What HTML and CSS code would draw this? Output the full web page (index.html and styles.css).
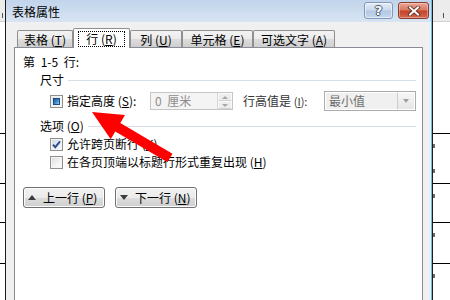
FILE: index.html
```html
<!DOCTYPE html>
<html lang="zh-CN">
<head>
<meta charset="utf-8">
<title>表格属性</title>
<link rel="stylesheet" href="styles.css">
</head>
<body>
<div class="screen">
  <div class="doc doc-left">
    <div class="ruler"><span class="tick tick-left"></span></div>
    <div class="cell r1"></div>
    <div class="cell r2"></div>
    <div class="cell r3"></div>
    <div class="cell r4"></div>
    <div class="cell r5"></div>
  </div>

  <div class="dialog">
    <div class="titlebar">
      <span class="title">表格属性</span>
      <div class="caption-btns">
        <span class="cap help">?</span>
        <span class="cap close">
          <svg width="14" height="10" viewBox="0 0 14 10">
            <path d="M3 1.5 L11 8.5 M11 1.5 L3 8.5" stroke="#5a2418" stroke-width="3.6" stroke-linecap="square" fill="none"/>
            <path d="M3 1.5 L11 8.5 M11 1.5 L3 8.5" stroke="#ffffff" stroke-width="2" stroke-linecap="square" fill="none"/>
          </svg>
        </span>
      </div>
    </div>

    <div class="body">
      <div class="tabs">
        <div class="tab t1">表格 (<u>T</u>)</div>
        <div class="tab t2 active"><span class="focus">行 (<u>R</u>)</span></div>
        <div class="tab t3">列 (<u>U</u>)</div>
        <div class="tab t4">单元格 (<u>E</u>)</div>
        <div class="tab t5">可选文字 (<u>A</u>)</div>
      </div>

      <div class="panel">
        <div class="row-info">第 1-5 行:</div>

        <div class="group-head">尺寸</div>

        <div class="row-height">
          <span class="checkbox mixed"><span class="fill"></span></span>
          <span class="label lbl-height">指定高度 (<u>S</u>):</span>
          <span class="input">
            <span class="input-text">0 厘米</span>
            <span class="spin">
              <span class="spin-btn"><span class="tri-up small"></span></span>
              <span class="spin-btn"><span class="tri-down small"></span></span>
            </span>
          </span>
          <span class="label lbl-rule">行高值是 <span class="mn">(<u>I</u>):</span></span>
          <span class="select">
            <span class="select-text">最小值</span>
            <span class="drop"><span class="tri-down grey"></span></span>
          </span>
        </div>

        <div class="group-head">选项 (<u>O</u>)</div>

        <div class="check-row">
          <span class="checkbox checked">
            <svg width="11" height="11" viewBox="0 0 11 11">
              <path d="M2 5.6 L4.3 8.2 L9 2.4" stroke="#2c4e8a" stroke-width="1.9" fill="none"/>
            </svg>
          </span>
          <span class="label">允许跨页断行 (<u>K</u>)</span>
        </div>
        <div class="check-row">
          <span class="checkbox"></span>
          <span class="label">在各页顶端以标题行形式重复出现 (<u>H</u>)</span>
        </div>

        <div class="btn-row">
          <span class="btn"><span class="tri-up"></span><span class="btn-text">上一行 (<u>P</u>)</span></span>
          <span class="btn"><span class="tri-down"></span><span class="btn-text">下一行 (<u>N</u>)</span></span>
        </div>
      </div>
    </div>
  </div>

  <div class="doc doc-right">
    <div class="ruler"><span class="tick tick-right"></span></div>
    <div class="cell r1"></div>
    <div class="cell r2"><span class="mark"></span><span class="mark second"></span></div>
    <div class="cell r3"><span class="mark"></span></div>
    <div class="cell r4"><span class="mark"></span></div>
    <div class="cell r5"><span class="mark"></span></div>
  </div>

  <svg class="arrow" width="450" height="300" viewBox="0 0 450 300">
    <polygon points="92,112 125,115 120.3,122.9 172.5,153.7 167.5,162.3 115.3,131.5 110.7,139.3" fill="#ff0000"/>
  </svg>
</div>
</body>
</html>
```

FILE: styles.css
```css
* { box-sizing: border-box; }

html, body {
  margin: 0;
  padding: 0;
}

body {
  width: 450px;
  height: 300px;
  overflow: hidden;
  background: #fff;
  font-family: "Noto Sans CJK SC", "Noto Sans", sans-serif;
  font-size: 12px;
  color: #000;
}

u { text-decoration: underline; text-underline-offset: 1px; }

.screen {
  position: relative;
  display: flex;
  width: 450px;
  height: 300px;
  overflow: hidden;
}

/* background document */
.doc {
  display: flex;
  flex-direction: column;
  background: #fff;
}
.doc-left { width: 5px; }
.doc-right { width: 17px; }

.ruler {
  height: 22px;
  background: #ececec;
  border-bottom: 1px solid #d0d0d0;
  display: flex;
}
.tick {
  width: 1px;
  height: 5px;
  background: #555;
  margin-top: 13px;
}
.tick-left { margin-left: 2px; }
.tick-right { margin-left: 10px; }

.cell {
  display: flex;
  flex-direction: column;
}
.r1 { height: 111px; }
.r2 { height: 50px; border-top: 1px solid #000; }
.r3 { height: 39px; border-top: 1px solid #000; }
.r4 { height: 41px; border-top: 1px solid #000; }
.r5 { flex: 1; border-top: 1px solid #000; }

.mark {
  width: 2px;
  height: 4px;
  background: #6a6a6a;
  margin-top: 10px;
}
.mark.second { margin-top: 21px; }

/* dialog */
.dialog {
  width: 428px;
  display: flex;
  flex-direction: column;
  border-left: 1px solid #1c1c1c;
  border-right: 1px solid #1c1c1c;
  padding-right: 1px;
  background: #62c0ea;
}

.titlebar {
  height: 22px;
  display: flex;
  align-items: center;
  justify-content: space-between;
  padding: 0 2px 0 6px;
  background: linear-gradient(#c1d4eb, #cfdef0 60%, #d8e4f3);
}
.title {
  font-size: 12px;
  line-height: 14px;
  color: #000;
  margin-top: 1px;
}

.caption-btns {
  display: flex;
  gap: 5px;
  align-self: flex-start;
  margin-top: 2px;
}
.cap {
  height: 17px;
  border-radius: 3px;
  display: flex;
  align-items: center;
  justify-content: center;
}
.help {
  width: 29px;
  border: 1px solid #7f99b9;
  background: linear-gradient(#e3ecf7, #c9d9ec 48%, #b3c8e2 52%, #c4d6ec);
  box-shadow: inset 0 0 0 1px rgba(255,255,255,0.55);
  color: #fff;
  font-family: "DejaVu Sans", sans-serif;
  font-weight: bold;
  font-size: 13px;
  line-height: 13px;
  text-shadow: 1px 0 #45566e, -1px 0 #45566e, 0 1px #45566e, 0 -1px #45566e;
}
.close {
  width: 31px;
  border: 1px solid #8b3b2b;
  background: linear-gradient(#e9a795, #d8785f 48%, #c3432a 52%, #d2674b);
  box-shadow: inset 0 0 0 1px rgba(255,255,255,0.35);
}

.body {
  flex: 1;
  display: flex;
  flex-direction: column;
  background: #f0f0f0;
  padding: 6px 8px 0 8px;
}

/* tabs */
.tabs {
  height: 19px;
  display: flex;
  align-items: flex-end;
  padding-left: 3px;
}
.tab {
  height: 17px;
  border: 1px solid #8e8f8f;
  border-bottom: none;
  border-radius: 2px 2px 0 0;
  background: linear-gradient(#f3f3f3, #ebebeb 50%, #dddddd 50%, #cfcfcf);
  display: flex;
  align-items: center;
  justify-content: center;
  line-height: 14px;
  white-space: nowrap;
  padding-top: 1px;
}
.t1 { width: 56px; }
.t2 { width: 57px; }
.t3 { width: 52px; }
.t4 { width: 71px; }
.t5 { width: 82px; }
.tab.active {
  height: 20px;
  margin-bottom: -1px;
  background: #fff;
  position: relative;
  z-index: 1;
  padding-top: 0;
}
.focus {
  width: 47px;
  height: 16px;
  border: 1px dotted #000;
  display: flex;
  align-items: center;
  justify-content: center;
}

.panel {
  flex: 1;
  background: #fff;
  border: 1px solid #898c95;
  border-bottom: none;
  display: flex;
  flex-direction: column;
}

.row-info {
  height: 14px;
  line-height: 14px;
  margin-top: 7px;
  padding-left: 8px;
  word-spacing: 3px;
}

.group-head {
  height: 14px;
  line-height: 14px;
  margin: 0 6px 0 25px;
  display: flex;
  align-items: center;
}
.group-head::after {
  content: "";
  flex: 1;
  border-top: 1px solid #d5dfe5;
  margin-left: 4px;
}
.row-info + .group-head { margin-top: 4px; }
.group-head + .check-row { margin-top: 2px; }
.row-height + .group-head { margin-top: 8px; }

.row-height {
  height: 20px;
  margin: 4px 0 0 35px;
  display: flex;
  align-items: center;
}

.label {
  line-height: 14px;
  white-space: nowrap;
}
.lbl-height {
  width: 83px;
  margin-left: 4px;
}
.lbl-rule {
  width: 81px;
  margin-left: 10px;
  color: #333;
}
.mn { font-size: 11px; }

.checkbox {
  width: 13px;
  height: 13px;
  flex: none;
  border: 1px solid #8e8f8f;
  background: linear-gradient(135deg, #dcdcdc, #f4f4f4 60%, #ffffff);
  box-shadow: inset 0 0 0 1px #f4f4f4;
  display: flex;
  align-items: center;
  justify-content: center;
}
.checkbox.checked {
  background: linear-gradient(135deg, #cbd6e4, #eef2f8 70%, #ffffff);
}
.checkbox.mixed .fill {
  width: 7px;
  height: 7px;
  border: 1px solid #1d4f86;
  background: linear-gradient(135deg, #1f5a99, #3d86c7 50%, #8ed0f6);
}

.input {
  width: 83px;
  height: 18px;
  border: 1px solid #c5c5c5;
  background: #f4f4f4;
  display: flex;
  align-items: center;
}
.input-text {
  flex: 1;
  padding-left: 4px;
  color: #8d8d8d;
  line-height: 14px;
  word-spacing: 3px;
}
.spin {
  width: 15px;
  height: 16px;
  display: flex;
  flex-direction: column;
  border-left: 1px solid #d6d6d6;
}
.spin-btn {
  flex: 1;
  display: flex;
  align-items: center;
  justify-content: center;
  background: #ededed;
  border: 1px solid #fafafa;
  border-bottom-color: #d2d2d2;
}

.select {
  width: 92px;
  height: 20px;
  border: 1px solid #acacac;
  background: #f0f0f0;
  box-shadow: inset 0 0 0 1px #fff;
  display: flex;
  align-items: stretch;
}
.select-text {
  flex: 1;
  padding-left: 4px;
  color: #6d6d6d;
  line-height: 18px;
}
.drop {
  width: 18px;
  border: 1px solid #fff;
  border-left: 1px solid #cdcdcd;
  background: linear-gradient(#f6f6f6, #e6e6e6);
  display: flex;
  align-items: center;
  justify-content: center;
}

.tri-up, .tri-down {
  width: 0;
  height: 0;
  border-left: 4px solid transparent;
  border-right: 4px solid transparent;
}
.tri-up { border-bottom: 5px solid #3c3c3c; }
.tri-down { border-top: 5px solid #3c3c3c; }
.tri-up.small { border-left-width: 3px; border-right-width: 3px; border-bottom: 3px solid #a8a8a8; }
.tri-down.small { border-left-width: 3px; border-right-width: 3px; border-top: 3px solid #a8a8a8; }
.tri-down.grey { border-top-color: #a0a0a0; border-left-width: 3.5px; border-right-width: 3.5px; border-top-width: 4px; }

.check-row {
  height: 18px;
  margin-left: 35px;
  display: flex;
  align-items: center;
  gap: 4px;
}

.btn-row {
  margin: 16px 0 0 8px;
  display: flex;
  gap: 10px;
}
.btn {
  width: 82px;
  height: 21px;
  border: 1px solid #707070;
  border-radius: 3px;
  background: linear-gradient(#f2f2f2, #ebebeb 50%, #dddddd 50%, #cfcfcf);
  box-shadow: inset 0 0 0 1px #fcfcfc;
  display: flex;
  align-items: center;
  padding-left: 4px;
  gap: 7px;
}
.btn-text {
  line-height: 14px;
  white-space: nowrap;
}

.arrow {
  position: absolute;
  left: 0;
  top: 0;
  pointer-events: none;
}
```
